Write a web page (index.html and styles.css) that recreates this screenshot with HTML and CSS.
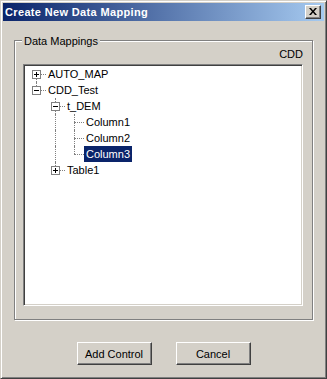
FILE: index.html
```html
<!DOCTYPE html>
<html lang="en">
<head>
  <meta charset="UTF-8" />
  <title>Create New Data Mapping</title>
  <link rel="stylesheet" href="styles.css">
</head>
<body>
  <div class="window">
    <div class="titlebar">
      <span class="title">Create New Data Mapping</span>
      <span class="close">
        <svg width="8" height="7" viewBox="0 0 8 7"><path d="M0 0h2l2 2.5L6 0h2L5 3.5 8 7H6L4 4.5 2 7H0l3-3.5z" fill="#000"/></svg>
      </span>
    </div>

    <!-- Group box -->
    <div class="group">
      <span class="legend">Data Mappings</span>
      <div class="cdd">CDD</div>
      <div class="tree">
        <div class="node">
          <span class="cell first">
            <svg class="box" width="9" height="9" viewBox="0 0 9 9"><rect x="0.5" y="0.5" width="8" height="8" fill="#fff" stroke="#808080"/><path d="M2 4.5h5M4.5 2v5" stroke="#000"/></svg>
          </span>
          <span class="label">AUTO_MAP</span>
        </div>
        <div class="node">
          <span class="cell elbow">
            <svg class="box" width="9" height="9" viewBox="0 0 9 9"><rect x="0.5" y="0.5" width="8" height="8" fill="#fff" stroke="#808080"/><path d="M2 4.5h5" stroke="#000"/></svg>
          </span>
          <span class="label">CDD_Test</span>
        </div>
        <div class="node">
          <span class="cell"></span>
          <span class="cell tee">
            <svg class="box" width="9" height="9" viewBox="0 0 9 9"><rect x="0.5" y="0.5" width="8" height="8" fill="#fff" stroke="#808080"/><path d="M2 4.5h5" stroke="#000"/></svg>
          </span>
          <span class="label">t_DEM</span>
        </div>
        <div class="node">
          <span class="cell"></span>
          <span class="cell pipe"></span>
          <span class="cell tee"></span>
          <span class="label">Column1</span>
        </div>
        <div class="node">
          <span class="cell"></span>
          <span class="cell pipe"></span>
          <span class="cell tee"></span>
          <span class="label">Column2</span>
        </div>
        <div class="node">
          <span class="cell"></span>
          <span class="cell pipe"></span>
          <span class="cell elbow"></span>
          <span class="label selected">Column3</span>
        </div>
        <div class="node">
          <span class="cell"></span>
          <span class="cell elbow">
            <svg class="box" width="9" height="9" viewBox="0 0 9 9"><rect x="0.5" y="0.5" width="8" height="8" fill="#fff" stroke="#808080"/><path d="M2 4.5h5M4.5 2v5" stroke="#000"/></svg>
          </span>
          <span class="label">Table1</span>
        </div>
      </div>
    </div>

    <div class="buttons">
      <button class="btn">Add Control</button>
      <button class="btn">Cancel</button>
    </div>
  </div>
</body>
</html>
```

FILE: styles.css
```css
body {
  margin: 0;
  font-family: "Liberation Sans", Arial, sans-serif;
  font-size: 11px;
  color: #000;
}
.window {
  width: 327px;
  height: 379px;
  box-sizing: border-box;
  background: #d4d0c8;
  border: 1px solid;
  border-color: #d4d0c8 #404040 #404040 #d4d0c8;
  box-shadow: inset 1px 1px #fff, inset -1px -1px #808080;
  padding: 2px;
  display: flex;
  flex-direction: column;
}
.titlebar {
  height: 18px;
  flex: none;
  background: linear-gradient(to right, #0a246a, #a6caf0);
  color: #fff;
  font-weight: bold;
  display: flex;
  align-items: center;
  justify-content: space-between;
  padding: 0 3px 0 2px;
}
.title {
  line-height: 13px;
  padding-top: 1px;
  letter-spacing: 0.35px;
}
.close {
  width: 16px;
  height: 14px;
  box-sizing: border-box;
  background: #d4d0c8;
  border: 1px solid;
  border-color: #fff #404040 #404040 #fff;
  box-shadow: inset -1px -1px #808080;
  display: flex;
  align-items: center;
  justify-content: center;
}
.close svg {
  display: block;
  margin: 0 1px 1px 0;
}
.group {
  position: relative;
  margin: 19px 11px 0;
  height: 280px;
  box-sizing: border-box;
  border: 1px solid #808080;
  box-shadow: inset 1px 1px #fff, 1px 1px #fff;
  padding: 7px 9px 13px 8px;
  display: flex;
  flex-direction: column;
}
.legend {
  position: absolute;
  top: -6px;
  left: 7px;
  padding: 0 2px;
  line-height: 13px;
  background: #d4d0c8;
}
.cdd {
  text-align: right;
  line-height: 13px;
}
.tree {
  margin-top: 3px;
  flex: 1;
  background: #fff;
  border: 1px solid;
  border-color: #808080 #fff #fff #808080;
  box-shadow: inset 1px 1px #404040, inset -1px -1px #d4d0c8;
  padding: 1px 0 0 3px;
}
.node {
  display: flex;
  height: 16px;
}
.cell {
  position: relative;
  width: 19px;
  flex: none;
}
.cell::before,
.cell::after {
  content: "";
  position: absolute;
}
.pipe::before,
.tee::before {
  left: 9px;
  top: 0;
  bottom: 0;
  border-left: 1px dotted #808080;
}
.elbow::before {
  left: 9px;
  top: 0;
  height: 8px;
  border-left: 1px dotted #808080;
}
.first::before {
  left: 9px;
  top: 8px;
  bottom: 0;
  border-left: 1px dotted #808080;
}
.tee::after,
.elbow::after,
.first::after {
  left: 9px;
  right: 0;
  top: 8px;
  border-top: 1px dotted #808080;
}
.box {
  position: absolute;
  left: 5px;
  top: 4px;
  z-index: 1;
}
.label {
  padding: 0 2px;
  line-height: 16px;
  white-space: nowrap;
}
.label.selected {
  background: #0a246a;
  color: #fff;
}
.buttons {
  display: flex;
  justify-content: center;
  gap: 24px;
  margin-top: 22px;
}
.btn {
  width: 75px;
  height: 23px;
  padding: 0;
  font: inherit;
  color: #000;
  background: #d4d0c8;
  border: 1px solid;
  border-color: #fff #404040 #404040 #fff;
  box-shadow: inset -1px -1px #808080;
}
```
